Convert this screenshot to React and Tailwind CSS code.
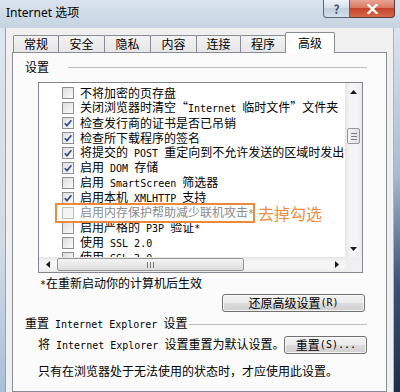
import React from 'react';

const items = [
  { t: '不将加密的页存盘', c: false },
  { t: '关闭浏览器时清空“Internet 临时文件”文件夹', c: false },
  { t: '检查发行商的证书是否已吊销', c: true },
  { t: '检查所下载程序的签名', c: true },
  { t: '将提交的 POST 重定向到不允许发送的区域时发出警告', c: true },
  { t: '启用 DOM 存储', c: true },
  { t: '启用 SmartScreen 筛选器', c: false },
  { t: '启用本机 XMLHTTP 支持', c: true },
  { t: '启用内存保护帮助减少联机攻击*', c: false, dim: true },
  { t: '启用严格的 P3P 验证*', c: false },
  { t: '使用 SSL 2.0', c: false },
  { t: '使用 SSL 3.0', c: false },
];

const tabs = [
  { label: '常规', w: 'w-[46px]' },
  { label: '安全', w: 'w-[47px]' },
  { label: '隐私', w: 'w-[47px]' },
  { label: '内容', w: 'w-[47px]' },
  { label: '连接', w: 'w-[45px]' },
  { label: '程序', w: 'w-[46px]' },
];

// latin parts look like SimSun's half-width glyphs
const Mixed = ({ text }) =>
  text
    .split(/([\x20-\x7e]+)/)
    .filter(Boolean)
    .map((p, i) =>
      /^[\x20-\x7e]+$/.test(p) ? (
        <span key={i} className="font-['DejaVu_Sans_Mono',monospace] text-[10px] whitespace-pre">
          {p}
        </span>
      ) : (
        <span key={i}>{p}</span>
      )
    );

const Checkbox = ({ checked, dim }) => (
  <div
    className={`w-[12px] h-[12px] shrink-0 border flex items-center justify-center ${
      dim ? 'border-[#bdbdbd] bg-[#f4f4f4]' : 'border-[#8e8f8f] bg-[linear-gradient(135deg,#dedede,#fbfbfb)]'
    }`}
  >
    {checked && (
      <svg width="10" height="10" viewBox="0 0 10 10">
        <path d="M1.8 5.2 L4 7.6 L8.4 2.2" fill="none" stroke="#2d4f93" strokeWidth="1.7" />
      </svg>
    )}
  </div>
);

const Arrow = ({ dir }) => {
  const pts = {
    up: '0,4 3.5,0 7,4',
    down: '0,0 3.5,4 7,0',
    left: '4,0 0,3.5 4,7',
    right: '0,0 4,3.5 0,7',
  }[dir];
  const vertical = dir === 'up' || dir === 'down';
  return (
    <svg width={vertical ? 7 : 4} height={vertical ? 4 : 7} viewBox={vertical ? '0 0 7 4' : '0 0 4 7'}>
      <polygon points={pts} fill="#1a1a1a" />
    </svg>
  );
};

const Button = ({ children, w }) => (
  <div
    className={`${w} h-[18px] rounded-[3px] border border-[#707070] bg-[linear-gradient(#f2f2f2_0%,#ebebeb_50%,#dddddd_50%,#cfcfcf_100%)] shadow-[inset_0_0_0_1px_rgba(255,255,255,0.75)] flex items-center justify-center text-[12px] leading-none text-black`}
  >
    {children}
  </div>
);

export default function App() {
  return (
    <div className="w-[400px] h-[392px] overflow-hidden flex flex-col font-['Noto_Sans_CJK_SC',sans-serif] text-black bg-[#c9d8e8]">
      {/* title bar */}
      <div className="h-[28px] shrink-0 flex items-start bg-[linear-gradient(to_bottom,#d9e3ee,#c6d3e2)]">
        <div className="pl-[6px] pt-[5px] text-[12px] leading-[16px] text-black font-['Noto_Sans','Noto_Sans_CJK_SC',sans-serif]">
          Internet 选项
        </div>
        <div className="ml-auto mr-[5px] flex">
          <div className="w-[27px] h-[18px] border border-t-0 border-[#5b6675] rounded-bl-[4px] bg-[linear-gradient(to_bottom,#eef3f8,#d3dde9_50%,#c1cfde_50%,#d2dfec)] flex items-center justify-center text-[12px] font-bold text-[#4a5565] leading-none">
            ?
          </div>
          <div className="w-[45px] h-[18px] border border-t-0 border-l-0 border-[#5b3a34] rounded-br-[4px] bg-[linear-gradient(to_bottom,#e9a593,#d7745f_50%,#c6442b_50%,#d86a4c)] flex items-center justify-center">
            <svg width="11" height="10" viewBox="0 0 11 10">
              <path d="M1.5 1 L9.5 9 M9.5 1 L1.5 9" stroke="#ffffff" strokeWidth="2.4" strokeLinecap="square" />
            </svg>
          </div>
        </div>
      </div>

      <div className="flex-1 flex min-h-0">
        {/* left frame */}
        <div className="w-[6px] shrink-0 bg-[linear-gradient(to_bottom,#dde6ef,#cfdbe7_60%,#a9c0da)] border-r border-[#93a3b5]" />

        {/* dialog body */}
        <div className="flex-1 min-w-0 bg-[#f0f0f0] flex flex-col">
          {/* tabs */}
          <div className="ml-[6px] pl-[1px] mt-[4px] h-[20px] flex items-end relative z-10 text-[12px]">
            {tabs.map((t, i) => (
              <div
                key={t.label}
                className={`${t.w} ${i > 0 ? '-ml-px' : ''} h-[17px] border border-b-0 border-[#898c95] rounded-t-[2px] bg-[linear-gradient(to_bottom,#f3f3f3,#e6e6e6)] flex items-center justify-center leading-none`}
              >
                {t.label}
              </div>
            ))}
            <div className="w-[50px] -ml-px h-[21px] -mb-px border border-b-0 border-[#898c95] rounded-t-[2px] bg-white flex items-start justify-center pt-[4px] leading-none">
              高级
            </div>
          </div>

          {/* tab page */}
          <div className="ml-[6px] w-[375px] flex-1 border border-[#898c95] bg-[#fbfbfb] pl-[12px] pr-[19px] pt-[7px]">
            <div className="flex items-center h-[14px] text-[12px] leading-[14px]">
              <span>设置</span>
              <div className="flex-1 ml-[19px] h-px bg-[#b9bec5]" />
            </div>

            <div className="relative ml-[13px] mt-[8px] w-[325px]">
              <div className="h-[191px] border border-[#828790] bg-white flex flex-col">
                <div className="flex h-[174px]">
                  <div className="flex-1 min-w-0 overflow-hidden pt-[2px] pl-[23px] text-[12px] leading-[15px]">
                    {items.map((it) => (
                      <div key={it.t} className="h-[15px] flex items-center gap-[6px] whitespace-nowrap">
                        <Checkbox checked={it.c} dim={it.dim} />
                        <span className={it.dim ? 'text-[#8a8a8a]' : ''}>
                          <Mixed text={it.t} />
                        </span>
                      </div>
                    ))}
                  </div>
                  {/* vertical scrollbar */}
                  <div className="w-[17px] shrink-0 flex flex-col bg-[linear-gradient(to_right,#e6e6e6,#f5f5f5_30%,#f5f5f5_70%,#ebebeb)]">
                    <div className="h-[17px] flex items-center justify-center">
                      <Arrow dir="up" />
                    </div>
                    <div className="mt-[28px] mx-[2px] h-[16px] rounded-[2px] border border-[#979797] bg-[linear-gradient(to_right,#f4f4f4,#e2e2e2)] flex flex-col items-center justify-center gap-[2px]">
                      <div className="w-[6px] h-px bg-[#7a7a7a]" />
                      <div className="w-[6px] h-px bg-[#7a7a7a]" />
                      <div className="w-[6px] h-px bg-[#7a7a7a]" />
                    </div>
                    <div className="flex-1" />
                    <div className="h-[17px] flex items-center justify-center">
                      <Arrow dir="down" />
                    </div>
                  </div>
                </div>
                {/* horizontal scrollbar */}
                <div className="flex-1 flex bg-[linear-gradient(to_bottom,#e6e6e6,#f5f5f5_30%,#f5f5f5_70%,#ebebeb)]">
                  <div className="w-[17px] flex items-center justify-center">
                    <Arrow dir="left" />
                  </div>
                  <div className="ml-px my-[1px] w-[187px] rounded-[2px] border border-[#979797] bg-[linear-gradient(to_bottom,#f4f4f4,#dcdcdc)] flex items-center justify-center gap-[2px]">
                    <div className="w-px h-[6px] bg-[#7a7a7a]" />
                    <div className="w-px h-[6px] bg-[#7a7a7a]" />
                    <div className="w-px h-[6px] bg-[#7a7a7a]" />
                  </div>
                  <div className="flex-1" />
                  <div className="w-[17px] flex items-center justify-center">
                    <Arrow dir="right" />
                  </div>
                  <div className="w-[17px] bg-[#f0f0f0]" />
                </div>
              </div>
              {/* annotation overlay */}
              <div className="absolute left-[17px] top-[121px] w-[200px] h-[20px] border-2 border-[#f0883a]" />
              <div className="absolute left-[220px] top-[121px] text-[16px] leading-[20px] text-[#ef8b3c] whitespace-nowrap">
                去掉勾选
              </div>
            </div>

            <div className="ml-[15px] mt-[3px] text-[12px] leading-[14px]">
              <Mixed text="*在重新启动你的计算机后生效" />
            </div>

            <div className="mt-[2px] flex justify-end pr-[2px]">
              <Button w="w-[143px]">
                <Mixed text="还原高级设置(R)" />
              </Button>
            </div>

            <div className="mt-[5px] flex items-center h-[14px] text-[12px] leading-[14px]">
              <span className="whitespace-nowrap">
                <Mixed text="重置 Internet Explorer 设置" />
              </span>
              <div className="flex-1 ml-[2px] h-px bg-[#b9bec5]" />
            </div>

            <div className="mt-[5px] flex items-center pr-[2px]">
              <div className="ml-[13px] text-[12px] leading-[14px] whitespace-nowrap">
                <Mixed text="将 Internet Explorer 设置重置为默认设置。" />
              </div>
              <div className="ml-auto">
                <Button w="w-[83px]">
                  <Mixed text="重置(S)..." />
                </Button>
              </div>
            </div>

            <div className="ml-[13px] mt-[10px] text-[12px] leading-[14px] whitespace-nowrap">
              只有在浏览器处于无法使用的状态时，才应使用此设置。
            </div>
          </div>
        </div>

        {/* right frame */}
        <div className="w-[7px] shrink-0 border-l border-[#a9b8c9] bg-[linear-gradient(to_bottom,#dbe5ef,#a8bcd3_40%,#3b5275_70%,#1c2d48)]" />
      </div>
    </div>
  );
}
